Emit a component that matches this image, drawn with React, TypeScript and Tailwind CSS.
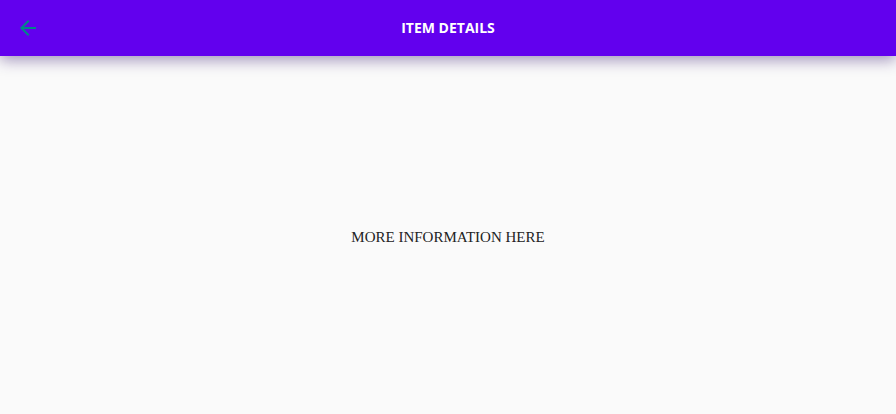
export default function App() {
  return (
    <div className="flex h-[414px] w-[896px] flex-col overflow-hidden bg-[#fafafa]">
      <header className="relative z-10 flex h-14 shrink-0 items-center bg-[#6200ee] px-4 shadow-[0_4px_14px_rgba(50,20,110,0.45)]">
        <button className="flex h-6 w-6 items-center justify-center text-[#018786]">
          <svg viewBox="0 0 24 24" className="h-6 w-6" fill="currentColor">
            <path d="M20 11H7.83l5.59-5.59L12 4l-8 8 8 8 1.41-1.41L7.83 13H20v-2z" />
          </svg>
        </button>
        <h1 className="absolute left-0 right-0 text-center font-['Open_Sans',sans-serif] text-sm font-bold text-white">
          ITEM DETAILS
        </h1>
      </header>
      <main className="flex flex-1 items-center justify-center pt-1">
        <p className="font-['Liberation_Serif',serif] text-[15px] text-[#222]">MORE INFORMATION HERE</p>
      </main>
    </div>
  );
}
